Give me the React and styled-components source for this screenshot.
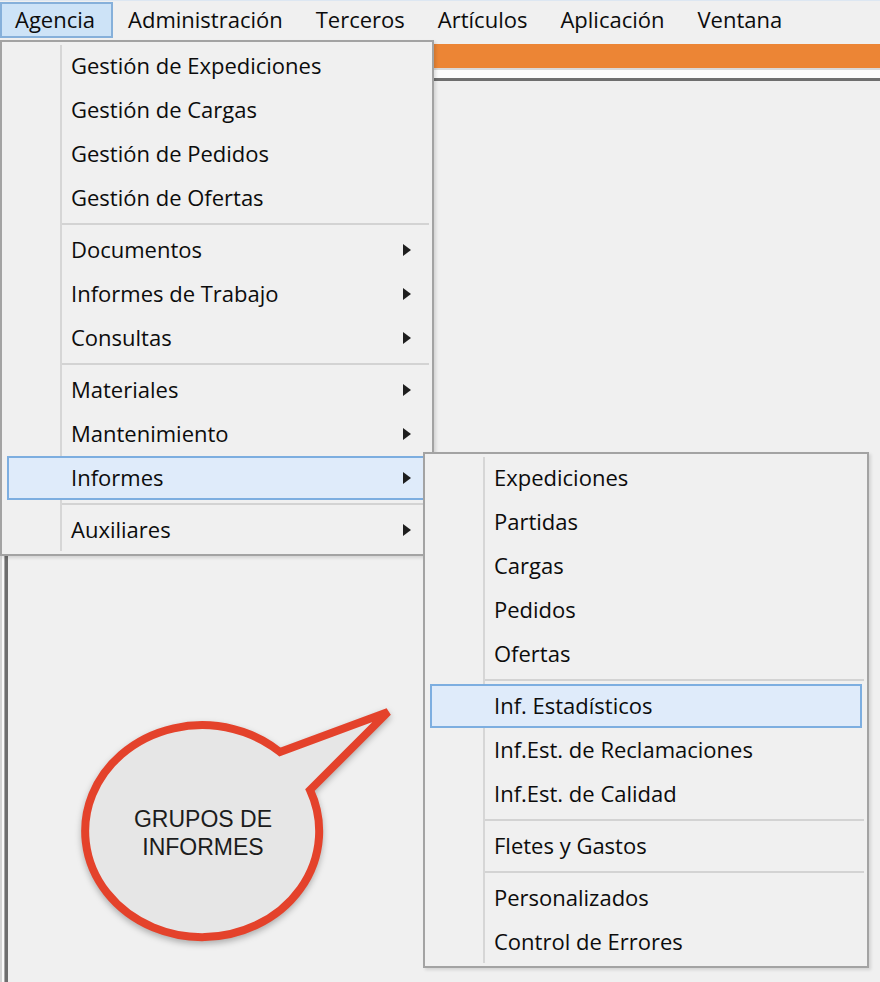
import React from "react";
import styled, { createGlobalStyle } from "styled-components";

const GlobalStyle = createGlobalStyle`
  html, body {
    margin: 0;
    padding: 0;
    background: #f0f0f0;
  }
  body {
    font-family: "Open Sans", "Noto Sans", sans-serif;
  }
`;

const topMenu = ["Agencia", "Administración", "Terceros", "Artículos", "Aplicación", "Ventana"];

const agenciaMenu = [
  { label: "Gestión de Expediciones" },
  { label: "Gestión de Cargas" },
  { label: "Gestión de Pedidos" },
  { label: "Gestión de Ofertas" },
  { sep: true },
  { label: "Documentos", sub: true },
  { label: "Informes de Trabajo", sub: true },
  { label: "Consultas", sub: true },
  { sep: true },
  { label: "Materiales", sub: true },
  { label: "Mantenimiento", sub: true },
  { label: "Informes", sub: true, active: true },
  { sep: true },
  { label: "Auxiliares", sub: true },
];

const informesMenu = [
  { label: "Expediciones" },
  { label: "Partidas" },
  { label: "Cargas" },
  { label: "Pedidos" },
  { label: "Ofertas" },
  { sep: true },
  { label: "Inf. Estadísticos", active: true },
  { label: "Inf.Est. de Reclamaciones" },
  { label: "Inf.Est. de Calidad" },
  { sep: true },
  { label: "Fletes y Gastos" },
  { sep: true },
  { label: "Personalizados" },
  { label: "Control de Errores" },
];

const Screen = styled.div`
  position: relative;
  width: 880px;
  height: 982px;
  overflow: hidden;
  background: #f0f0f0;
  display: flex;
  flex-direction: column;
`;

const MenuBar = styled.div`
  display: flex;
  height: 40px;
  box-sizing: border-box;
  padding: 1px 0 2px;
  border-top: 1px solid #dde7f2;
  background: #f0f0f0;
`;

const BarItem = styled.div`
  display: flex;
  align-items: center;
  padding: 0 16px 2px 13px;
  font-size: 22px;
  color: #0c0c0c;
  border: 2px solid ${(p) => (p.$open ? "#86b0da" : "transparent")};
  background: ${(p) => (p.$open ? "#cde3f7" : "transparent")};
`;

const Workspace = styled.div`
  flex: 1;
  display: flex;
  flex-direction: column;
`;

const OrangeStrip = styled.div`
  margin-top: 4px;
  height: 24px;
  background: #ec8535;
  border-bottom: 2px solid #d9d9d9;
`;

const WhiteGap = styled.div`
  height: 8px;
  background: #fbfbfb;
`;

const ClientArea = styled.div`
  flex: 1;
  margin-left: 5px;
  background: #f0f0f0;
  border-top: 3px solid #6e6e6e;
  border-left: 3px solid #6e6e6e;
  box-shadow: -1px 0 0 #a8a8a8, -3px 0 0 #fafafa, -5px 0 0 #d4d4d4;
`;

const Menu = styled.div`
  position: absolute;
  left: ${(p) => p.$x}px;
  top: ${(p) => p.$y}px;
  width: ${(p) => p.$w}px;
  box-sizing: border-box;
  padding: 2px 0;
  border: 2px solid #a3a3a3;
  background: linear-gradient(#d6d6d6, #d6d6d6) 58px 3px / 2px calc(100% - 6px) no-repeat,
    #f0f0f0;
  box-shadow: 2px 2px 3px rgba(0, 0, 0, 0.12);
  z-index: ${(p) => p.$z};
`;

const Row = styled.div`
  display: flex;
  align-items: center;
  justify-content: space-between;
  height: 44px;
  box-sizing: border-box;
  margin: 0 5px;
  padding: 0 14px 3px 62px;
  font-size: 22px;
  color: #0c0c0c;
  white-space: nowrap;
  border: 2px solid ${(p) => (p.$active ? "#7daee0" : "transparent")};
  background: ${(p) => (p.$active ? "#dfebfa" : "transparent")};
`;

const Arrow = styled.span`
  width: 0;
  height: 0;
  margin-top: 2px;
  border-left: 8px solid #1e1e1e;
  border-top: 6px solid transparent;
  border-bottom: 6px solid transparent;
`;

const Separator = styled.div`
  height: 2px;
  margin: 3px 3px 3px 60px;
  background: #d3d3d3;
`;

const Bubble = styled.div`
  position: absolute;
  left: 80px;
  top: 700px;
  width: 320px;
  height: 260px;
  z-index: 5;
  svg {
    display: block;
    filter: drop-shadow(0 3px 3px rgba(0, 0, 0, 0.28));
  }
`;

const BubbleText = styled.div`
  position: absolute;
  left: 0;
  top: 105px;
  width: 246px;
  text-align: center;
  font-family: "Liberation Sans", Arial, sans-serif;
  font-size: 23px;
  line-height: 28px;
  color: #1c1c1c;
`;

const DropMenu = ({ items, ...rest }) => (
  <Menu {...rest}>
    {items.map((it, i) =>
      it.sep ? (
        <Separator key={i} />
      ) : (
        <Row key={i} $active={it.active}>
          <span>{it.label}</span>
          {it.sub && <Arrow />}
        </Row>
      )
    )}
  </Menu>
);

const App = () => {
  return (
    <>
      <GlobalStyle />
      <Screen>
        <MenuBar>
          {topMenu.map((m, i) => (
            <BarItem key={m} $open={i === 0}>
              {m}
            </BarItem>
          ))}
        </MenuBar>
        <Workspace>
          <OrangeStrip />
          <WhiteGap />
          <ClientArea />
        </Workspace>

        <DropMenu items={agenciaMenu} $x={0} $y={40} $w={434} $z={2} />
        <DropMenu items={informesMenu} $x={423} $y={452} $w={446} $z={3} />

        <Bubble>
          <svg width="320" height="260" viewBox="80 700 320 260">
            <path
              d="M 280 752 L 388 712 L 310 790 A 117 106 0 1 1 280 752 Z"
              fill="#e6e6e6"
              stroke="#e4422b"
              strokeWidth="8"
              strokeLinejoin="miter"
            />
          </svg>
          <BubbleText>
            GRUPOS DE
            <br />
            INFORMES
          </BubbleText>
        </Bubble>
      </Screen>
    </>
  );
};

export default App;
